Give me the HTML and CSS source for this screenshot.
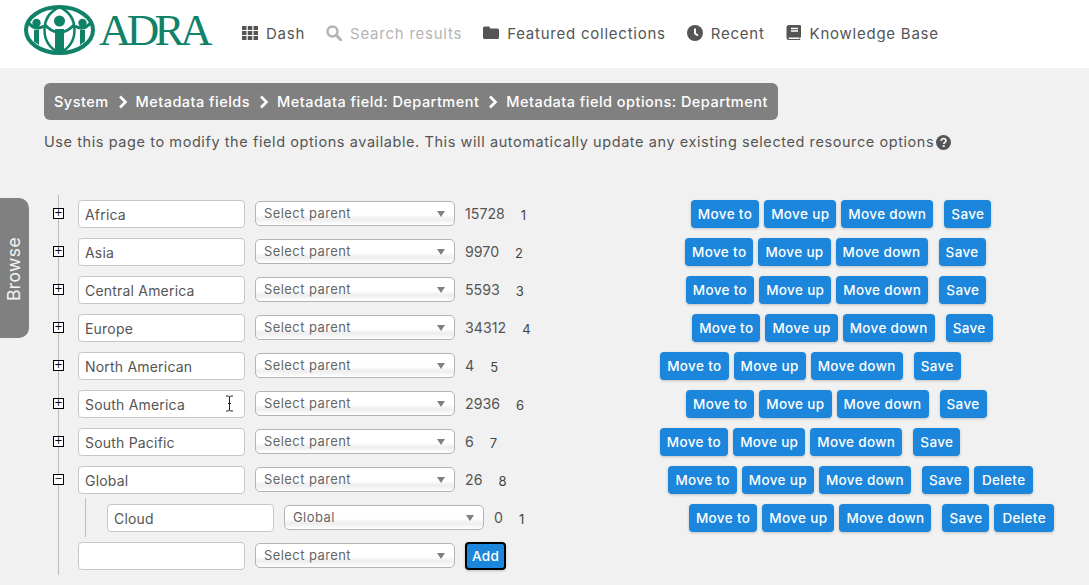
FILE: index.html
```html
<!DOCTYPE html>
<html lang="en">
<head>
<meta charset="utf-8">
<title>Metadata field options: Department</title>
<link rel="stylesheet" href="styles.css">
</head>
<body>
<header class="topbar">
  <a class="logo">
    <svg class="logo-mark" viewBox="0 0 71 50" width="71" height="50" aria-hidden="true">
      <ellipse cx="35.500" cy="25" rx="33.500" ry="23" fill="#fff" stroke="#0f8268" stroke-width="4"/>
      <path d="M35.500 2C25 7 20.500 16 20.500 25c0 9 4.500 18 15 23M35.500 2C46 7 50.500 16 50.500 25c0 9-4.500 18-15 23" fill="none" stroke="#0f8268" stroke-width="2.500"/>
      <path d="M3 16Q11 27 20 21M68 16Q60 27 51 21M21 20Q30 29 35.500 26Q41 29 50 20" fill="none" stroke="#0f8268" stroke-width="3"/>
      <circle cx="35.500" cy="16" r="5.500" fill="#0f8268"/>
      <circle cx="12.500" cy="18" r="4.200" fill="#0f8268"/>
      <circle cx="58.500" cy="18" r="4.200" fill="#0f8268"/>
      <path d="M31 24h9v25h-9zM10 25h5v15l-5-3.500zM56 25h5v11.500L56 40z" fill="#0f8268"/>
    </svg>
    <span class="logo-text">ADRA</span>
  </a>
  <nav class="nav">
    <a class="nav-item"><svg class="nav-icon" viewBox="0 0 16 16"><path d="M0 1h4.500v4H0zM5.750 1h4.500v4h-4.500zM11.500 1H16v4h-4.500zM0 6h4.500v4H0zM5.750 6h4.500v4h-4.500zM11.500 6H16v4h-4.500zM0 11h4.500v4H0zM5.750 11h4.500v4h-4.500zM11.500 11H16v4h-4.500z"/></svg>Dash</a>
    <a class="nav-item nav-muted"><svg class="nav-icon" viewBox="0 0 16 16"><circle cx="6.500" cy="6.500" r="5" fill="none" stroke="currentColor" stroke-width="2.400"/><path d="M10 10l5 5" stroke="currentColor" stroke-width="3" stroke-linecap="round"/></svg>Search results</a>
    <a class="nav-item"><svg class="nav-icon" viewBox="0 0 16 16"><path d="M1.500 1.500h4.500l1.500 2h7a1.500 1.500 0 0 1 1.500 1.500v7.500a1.500 1.500 0 0 1-1.500 1.500h-13A1.500 1.500 0 0 1 0 12.500V3a1.500 1.500 0 0 1 1.500-1.500z"/></svg>Featured collections</a>
    <a class="nav-item"><svg class="nav-icon" viewBox="0 0 16 16"><circle cx="8" cy="8" r="8"/><path d="M8 3.500V8.500l3 2" fill="none" stroke="#fff" stroke-width="2"/></svg>Recent</a>
    <a class="nav-item nav-book"><svg class="nav-icon" viewBox="0 0 16 16"><path d="M3 0h11a1 1 0 0 1 1 1v11l-1 1v1.500l1 .5H3a2.500 2.500 0 0 1-2.500-2.500v-10A2.500 2.500 0 0 1 3 0z"/><path d="M5 3.500h7M5 6h7M2.800 13.200H13.500" stroke="#fff" stroke-width="1.400"/></svg>Knowledge Base</a>
  </nav>
</header>

<aside class="browse-tab"><span class="browse-label">Browse</span></aside>

<main class="content">
  <div class="crumbs">
    <span>System</span><svg class="chev" viewBox="0 0 10 14"><path d="M2 1.500L7.500 7 2 12.500" fill="none" stroke="#fff" stroke-width="2.600"/></svg>
    <span>Metadata fields</span><svg class="chev" viewBox="0 0 10 14"><path d="M2 1.500L7.500 7 2 12.500" fill="none" stroke="#fff" stroke-width="2.600"/></svg>
    <span>Metadata field: Department</span><svg class="chev" viewBox="0 0 10 14"><path d="M2 1.500L7.500 7 2 12.500" fill="none" stroke="#fff" stroke-width="2.600"/></svg>
    <span>Metadata field options: Department</span>
  </div>
  <p class="intro">Use this page to modify the field options available. This will automatically update any existing selected resource options<svg class="help" viewBox="0 0 16 16"><circle cx="8" cy="8" r="8"/><path d="M5.400 6.200C5.600 4.600 6.600 3.900 8 3.900c1.500 0 2.600.9 2.600 2.200 0 1.900-2.300 1.900-2.300 3.400" fill="none" stroke="#f1f1f1" stroke-width="1.900"/><path d="M7.100 10.800h2.200v2H7.100z" fill="#f1f1f1"/></svg></p>

  <div class="tree">
    <div class="row">
      <span class="toggle">+</span><input class="name" value="Africa"><span class="select">Select parent</span><span class="count">15728</span><span class="index">1</span>
      <div class="actions"><button class="btn">Move to</button><button class="btn">Move up</button><button class="btn">Move down</button><button class="btn save">Save</button></div>
    </div>
    <div class="row">
      <span class="toggle">+</span><input class="name" value="Asia"><span class="select">Select parent</span><span class="count">9970</span><span class="index">2</span>
      <div class="actions"><button class="btn">Move to</button><button class="btn">Move up</button><button class="btn">Move down</button><button class="btn save">Save</button></div>
    </div>
    <div class="row">
      <span class="toggle">+</span><input class="name" value="Central America"><span class="select">Select parent</span><span class="count">5593</span><span class="index">3</span>
      <div class="actions"><button class="btn">Move to</button><button class="btn">Move up</button><button class="btn">Move down</button><button class="btn save">Save</button></div>
    </div>
    <div class="row">
      <span class="toggle">+</span><input class="name" value="Europe"><span class="select">Select parent</span><span class="count">34312</span><span class="index">4</span>
      <div class="actions"><button class="btn">Move to</button><button class="btn">Move up</button><button class="btn">Move down</button><button class="btn save">Save</button></div>
    </div>
    <div class="row">
      <span class="toggle">+</span><input class="name" value="North American"><span class="select">Select parent</span><span class="count">4</span><span class="index">5</span>
      <div class="actions"><button class="btn">Move to</button><button class="btn">Move up</button><button class="btn">Move down</button><button class="btn save">Save</button></div>
    </div>
    <div class="row">
      <span class="toggle">+</span><input class="name" value="South America"><span class="select">Select parent</span><span class="count">2936</span><span class="index">6</span>
      <div class="actions"><button class="btn">Move to</button><button class="btn">Move up</button><button class="btn">Move down</button><button class="btn save">Save</button></div>
      <svg class="ibeam" viewBox="0 0 9 17"><path d="M1 1h2.500l1 1 1-1H8M4.500 2v13M1 16h2.500l1-1 1 1H8M3 8.500h3" fill="none" stroke="#222" stroke-width="1"/></svg>
    </div>
    <div class="row">
      <span class="toggle">+</span><input class="name" value="South Pacific"><span class="select">Select parent</span><span class="count">6</span><span class="index">7</span>
      <div class="actions"><button class="btn">Move to</button><button class="btn">Move up</button><button class="btn">Move down</button><button class="btn save">Save</button></div>
    </div>
    <div class="row">
      <span class="toggle">−</span><input class="name" value="Global"><span class="select">Select parent</span><span class="count">26</span><span class="index">8</span>
      <div class="actions"><button class="btn">Move to</button><button class="btn">Move up</button><button class="btn">Move down</button><button class="btn save">Save</button><button class="btn del">Delete</button></div>
    </div>
    <div class="row child">
      <input class="name" value="Cloud"><span class="select">Global</span><span class="count">0</span><span class="index">1</span>
      <div class="actions"><button class="btn">Move to</button><button class="btn">Move up</button><button class="btn">Move down</button><button class="btn save">Save</button><button class="btn del">Delete</button></div>
    </div>
    <div class="row">
      <span class="toggle-blank"></span><input class="name" value=""><span class="select">Select parent</span><button class="btn add">Add</button>
    </div>
  </div>
</main>
</body>
</html>
```
FILE: styles.css
```css
* { box-sizing: border-box; }
html, body { margin: 0; height: 585px; overflow: hidden; }
body { background: #f1f1f1; color: #555; font-family: Inter, "Open Sans", sans-serif; font-size: 14px; }

.topbar { display: flex; align-items: center; height: 68px; background: #fff; padding-left: 24px; }
.logo { display: flex; align-items: center; color: #0f8268; width: 218px; margin-top: -8px; }
.logo-mark { flex: none; }
.logo-text { font-family: "Liberation Serif", serif; font-size: 45px; line-height: 50px; letter-spacing: -4.700px; margin-left: 4px; }
.nav { display: flex; gap: 21px; margin-top: -2px; }
.nav-item { display: flex; align-items: center; gap: 8px; color: #555; font-size: 15px; letter-spacing: .76px; }
.nav-muted { color: #b4b4b4; }
.nav-icon { width: 16px; height: 16px; fill: currentColor; flex: none; }

.browse-tab { position: absolute; left: 0; top: 198px; width: 29px; height: 140px; padding-right: 3px; background: #808080; border-radius: 0 10px 10px 0; display: flex; align-items: center; justify-content: center; }
.browse-label { color: #f4f4f4; font-size: 17.500px; writing-mode: vertical-rl; transform: rotate(180deg); letter-spacing: .4px; margin-top: 3px; }

.content { padding: 15px 0 0 44px; }
.crumbs { display: inline-flex; align-items: center; height: 37px; padding: 0 10px; background: #808080; border-radius: 6px; color: #fff; font-size: 14.500px; font-weight: 500; letter-spacing: .47px; }
.chev { width: 10px; height: 14px; margin: 0 8px 0 9px; }
.intro { margin: 12px 0 0; font-size: 14.500px; line-height: 20px; letter-spacing: .58px; color: #555; display: flex; align-items: center; }
.help { width: 15px; height: 15px; fill: #555; margin-left: 2px; }

.tree { position: relative; margin-top: 43px; margin-left: 8px; padding-top: 5px; }
.tree::before { content: ""; position: absolute; left: 6px; top: 0; height: 380px; width: 1px; background: #bdbdbd; }
.row { position: relative; display: flex; align-items: center; height: 28px; margin-bottom: 10px; }
.toggle, .toggle-blank { flex: none; width: 11px; height: 11px; margin: 0 14px 0 1px; }
.toggle { position: relative; display: flex; align-items: center; justify-content: center; border: 1px solid #000; background: #fff; color: #000; font-size: 10px; line-height: 1; font-family: "DejaVu Sans", sans-serif; margin-top: -2px; }
.child { padding-left: 55px; }
.child::before { content: ""; position: absolute; left: 33px; top: -6px; height: 39px; width: 1px; background: #bdbdbd; }
.name { flex: none; width: 167px; height: 28px; margin: 0; padding: 0 6px; background: #fff; border: 1px solid #c6c6c6; border-radius: 4px; color: #555; font: 14px Inter, sans-serif; letter-spacing: .2px; }
.select { position: relative; flex: none; width: 200px; height: 25px; margin: -1px 10px 0; padding-left: 8px; background: linear-gradient(#fff 55%, #ededed 75%, #fff); border: 1px solid #b4b4b4; border-radius: 5px; color: #666; font-size: 13px; line-height: 23px; letter-spacing: .42px; }
.select::after { content: ""; position: absolute; right: 9px; top: 9px; border: 4px solid transparent; border-top: 6px solid #808080; border-bottom: 0; }
.count { flex: none; margin-top: -2px; margin-right: 16px; color: #555; font-size: 14.200px; }
.index { flex: none; width: 170px; font-size: 13px; color: #444; margin-top: 1px; }
.actions { display: flex; gap: 5px; }
.btn { flex: none; height: 28px; margin: 0; padding: 0 7px; border: 0; border-radius: 4px; background: #1b86db; color: #fff; font: 500 13.500px Inter, sans-serif; letter-spacing: .35px; box-shadow: 0 1px 3px rgba(0,0,0,.2); }
.save { margin-left: 6px; }
.del { padding: 0 8px; }
.add { height: 28px; border: 2px solid #000; padding: 0 5px; }
.ibeam { position: absolute; left: 173px; top: 5px; width: 9px; height: 17px; }
```
